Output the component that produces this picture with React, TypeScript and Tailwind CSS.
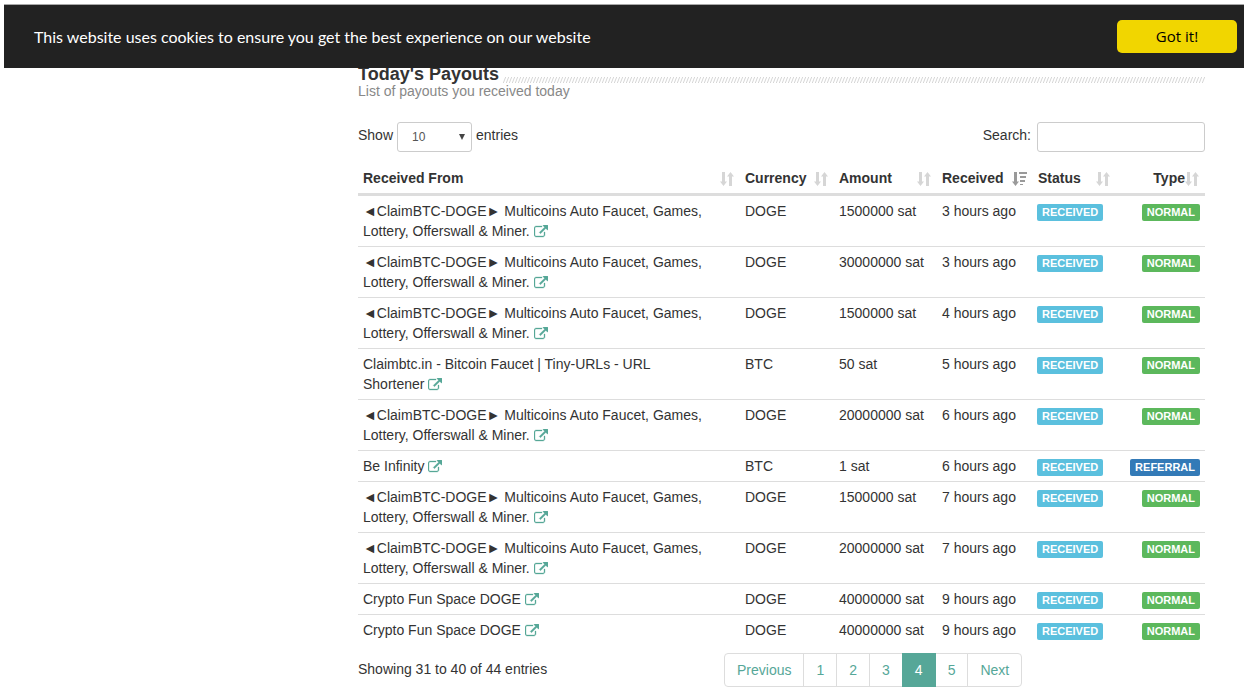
import React from 'react';

type Payout = {
  from: string;
  currency: string;
  amount: string;
  received: string;
  type: 'NORMAL' | 'REFERRAL';
};

const CLAIM = '◄ClaimBTC-DOGE► Multicoins Auto Faucet, Games, Lottery, Offerswall & Miner.';

const payouts: Payout[] = [
  { from: CLAIM, currency: 'DOGE', amount: '1500000 sat', received: '3 hours ago', type: 'NORMAL' },
  { from: CLAIM, currency: 'DOGE', amount: '30000000 sat', received: '3 hours ago', type: 'NORMAL' },
  { from: CLAIM, currency: 'DOGE', amount: '1500000 sat', received: '4 hours ago', type: 'NORMAL' },
  { from: 'Claimbtc.in - Bitcoin Faucet | Tiny-URLs - URL Shortener', currency: 'BTC', amount: '50 sat', received: '5 hours ago', type: 'NORMAL' },
  { from: CLAIM, currency: 'DOGE', amount: '20000000 sat', received: '6 hours ago', type: 'NORMAL' },
  { from: 'Be Infinity', currency: 'BTC', amount: '1 sat', received: '6 hours ago', type: 'REFERRAL' },
  { from: CLAIM, currency: 'DOGE', amount: '1500000 sat', received: '7 hours ago', type: 'NORMAL' },
  { from: CLAIM, currency: 'DOGE', amount: '20000000 sat', received: '7 hours ago', type: 'NORMAL' },
  { from: 'Crypto Fun Space DOGE', currency: 'DOGE', amount: '40000000 sat', received: '9 hours ago', type: 'NORMAL' },
  { from: 'Crypto Fun Space DOGE', currency: 'DOGE', amount: '40000000 sat', received: '9 hours ago', type: 'NORMAL' },
];

const columns = [
  { label: 'Received From', width: '' },
  { label: 'Currency', width: 'w-[94px]' },
  { label: 'Amount', width: 'w-[103px]' },
  { label: 'Received', width: 'w-[96px]' },
  { label: 'Status', width: 'w-[83px]' },
  { label: 'Type', width: 'w-[89px]' },
];

const pages = ['Previous', '1', '2', '3', '4', '5', 'Next'];

function ExternalLinkIcon() {
  return (
    <svg
      viewBox="0 0 1792 1792"
      className="inline-block size-[14px] fill-current stroke-current align-[-3px]"
      strokeWidth="40"
      aria-hidden="true"
    >
      <path d="M1408 928v320q0 119-84.500 203.500t-203.500 84.500h-832q-119 0-203.500-84.500t-84.500-203.500v-832q0-119 84.500-203.500t203.500-84.500h704q14 0 23 9t9 23v64q0 14-9 23t-23 9h-704q-66 0-113 47t-47 113v832q0 66 47 113t113 47h832q66 0 113-47t47-113v-320q0-14 9-23t23-9h64q14 0 23 9t9 23zm384-864v512q0 26-19 45t-45 19-45-19l-176-176-652 652q-10 10-23 10t-23-10l-114-114q-10-10-10-23t10-23l652-652-176-176q-19-19-19-45t19-45 45-19h512q26 0 45 19t19 45z" />
    </svg>
  );
}

function SortIcon() {
  return (
    <svg viewBox="0 0 14 14" className="mt-px size-[14px] fill-[#d6d6d6]" aria-hidden="true">
      <path d="M2 0h3v9.500h2L3.500 14 0 9.500h2z" />
      <path d="M9 14h3V4.500h2L10.500 0 7 4.500h2z" />
    </svg>
  );
}

function SortDescIcon() {
  return (
    <svg viewBox="0 0 15 14" className="mt-px h-[14px] w-[15px] fill-[#9a9a9a]" aria-hidden="true">
      <path d="M2 0h3v9.500h2L3.500 14 0 9.500h2z" />
      <path d="M7 0h8v2H7zM8 4h6v2H8zM8 8h5v2H8zM8 12h3v1H8z" />
    </svg>
  );
}

function Hatching() {
  return (
    <svg className="mt-[13px] h-[6px] min-w-0 flex-1" aria-hidden="true">
      <defs>
        <pattern id="hatch" width="3" height="6" patternUnits="userSpaceOnUse">
          <path d="M0.300 6L2.700 0M-2.700 6L-0.300 0M3.300 6L5.700 0" stroke="#cccccc" strokeWidth="0.800" />
        </pattern>
      </defs>
      <rect width="100%" height="6" fill="url(#hatch)" />
    </svg>
  );
}

function Badge({ text }: { text: string }) {
  const color = text === 'RECEIVED' ? 'bg-[#5bc0de]' : text === 'REFERRAL' ? 'bg-[#337ab7]' : 'bg-[#5cb85c]';
  return (
    <span className={`rounded-[2px] px-[5px] pt-[2px] pb-[3px] text-[11px] leading-[11px] font-bold text-white ${color}`}>
      {text}
    </span>
  );
}

export default function App() {
  return (
    <div className="relative bg-white font-['Liberation_Sans',Arial,sans-serif] text-[14px] leading-[20px] text-[#333333]">
      <div
        role="region"
        aria-label="Cookie notice"
        className="absolute top-1 right-0 left-1 z-10 flex h-16 items-center justify-between border-t border-[#a8a8a8] bg-[#222222] pr-[7px] pl-[30px]"
      >
        <p className="font-[Lato,sans-serif] text-[16px] leading-6 text-white">
          This website uses cookies to ensure you get the best experience on our website
        </p>
        <button
          type="button"
          className="h-[33px] w-[120px] rounded-[5px] bg-[#f1d600] pb-[2px] font-['Open_Sans',sans-serif] text-[15px] text-black"
        >
          Got it!
        </button>
      </div>

      <main className="pt-16 pr-[39px] pl-[358px]">
        <header>
          <div className="flex items-start gap-1">
            <h1 className="text-[18px] leading-[20px] font-bold">Today&apos;s Payouts</h1>
            <Hatching />
          </div>
          <p className="leading-[14px] text-[#888888]">List of payouts you received today</p>
        </header>

        <div className="mt-6 flex items-start justify-between">
          <label className="flex items-start gap-1">
            <span className="pt-[3px]">Show</span>
            <span className="relative">
              <select
                defaultValue="10"
                className="h-[30px] w-[75px] appearance-none rounded-[3px] border border-[#cccccc] bg-white pl-[14px] text-[12px] text-[#555555]"
              >
                <option>10</option>
                <option>25</option>
                <option>50</option>
                <option>100</option>
              </select>
              <svg viewBox="0 0 6 6" className="pointer-events-none absolute top-3 right-[7px] size-[6px] fill-[#444444]" aria-hidden="true">
                <path d="M0 0h6L3 6z" />
              </svg>
            </span>
            <span className="pt-[3px]">entries</span>
          </label>
          <label className="flex items-start gap-[6px]">
            <span className="pt-[3px]">Search:</span>
            <input type="search" className="h-[30px] w-[168px] rounded-[3px] border border-[#cccccc] bg-white px-2 text-[12px]" />
          </label>
        </div>

        <table className="mt-[11px] w-full table-fixed border-separate border-spacing-0">
          <thead>
            <tr>
              {columns.map((c) => (
                <th key={c.label} scope="col" className={`border-b-2 border-[#dddddd] py-[5px] pr-[6px] pl-[5px] font-bold ${c.width}`}>
                  <div className={`flex items-center ${c.label === 'Type' ? 'justify-end' : 'justify-between'}`}>
                    <span>{c.label}</span>
                    {c.label === 'Received' ? <SortDescIcon /> : <SortIcon />}
                  </div>
                </th>
              ))}
            </tr>
          </thead>
          <tbody className="align-top">
            {payouts.map((p, i) => (
              <tr key={i}>
                <td className="border-t border-[#dddddd] py-[5px] pr-8 pl-[5px]">
                  {p.from}{' '}
                  <a href="#visit" aria-label={`Open ${p.from}`} className="text-[#56a798]">
                    <ExternalLinkIcon />
                  </a>
                </td>
                <td className="border-t border-[#dddddd] p-[5px]">{p.currency}</td>
                <td className="border-t border-[#dddddd] p-[5px] whitespace-nowrap">{p.amount}</td>
                <td className="border-t border-[#dddddd] p-[5px] whitespace-nowrap">{p.received}</td>
                <td className="border-t border-[#dddddd] px-1 py-[5px]">
                  <Badge text="RECEIVED" />
                </td>
                <td className="border-t border-[#dddddd] p-[5px] text-right">
                  <Badge text={p.type} />
                </td>
              </tr>
            ))}
          </tbody>
        </table>

        <div className="mt-2 flex items-start">
          <p className="w-[366px] pt-[6px]">Showing 31 to 40 of 44 entries</p>
          <nav aria-label="Pagination">
            <ul className="flex">
              {pages.map((label) => (
                <li key={label} className="group -ml-px first:ml-0">
                  <a
                    href="#payouts"
                    aria-current={label === '4' ? 'page' : undefined}
                    className={`block border px-3 py-[6px] group-first:rounded-l-[4px] group-last:rounded-r-[4px] ${
                      label === '4'
                        ? 'relative border-[#56a798] bg-[#56a798] text-white'
                        : 'border-[#dddddd] bg-white text-[#56a798]'
                    }`}
                  >
                    {label}
                  </a>
                </li>
              ))}
            </ul>
          </nav>
        </div>
      </main>
    </div>
  );
}
